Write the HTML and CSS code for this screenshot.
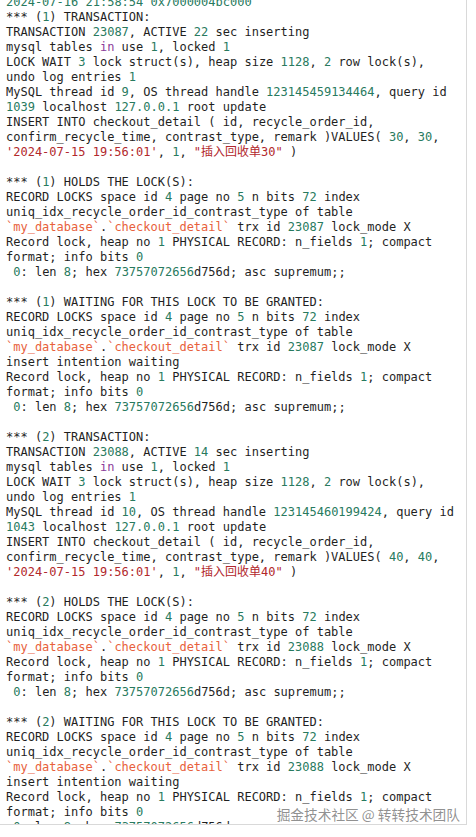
FILE: index.html
```html
<!DOCTYPE html>
<html lang="zh-CN">
<head>
<meta charset="utf-8">
<title>InnoDB deadlock log</title>
<link rel="stylesheet" href="styles.css">
</head>
<body>
<div class="page">
<div class="code-box">
<pre class="code"><span class="n">2024-07-16</span> <span class="n">21:58:54</span> <span class="n">0x7000004bc000</span>
*** (<span class="n">1</span>) TRANSACTION:
TRANSACTION <span class="n">23087</span>, ACTIVE <span class="n">22</span> sec inserting
mysql tables <span class="k">in</span> use <span class="n">1</span>, locked <span class="n">1</span>
LOCK WAIT <span class="n">3</span> lock struct(s), heap size <span class="n">1128</span>, <span class="n">2</span> row lock(s),
undo log entries <span class="n">1</span>
MySQL thread id <span class="n">9</span>, OS thread handle <span class="n">123145459134464</span>, query id
<span class="n">1039</span> localhost <span class="n">127.0.0.1</span> root update
INSERT INTO checkout_detail ( id, recycle_order_id,
confirm_recycle_time, contrast_type, remark )VALUES( <span class="n">30</span>, <span class="n">30</span>,
<span class="s">'2024-07-15 19:56:01'</span>, <span class="n">1</span>, <span class="s">"插入回收单30"</span> )

*** (<span class="n">1</span>) HOLDS THE LOCK(S):
RECORD LOCKS space id <span class="n">4</span> page no <span class="n">5</span> n bits <span class="n">72</span> index
uniq_idx_recycle_order_id_contrast_type of table
<span class="b">`my_database`</span>.<span class="b">`checkout_detail`</span> trx id <span class="n">23087</span> lock_mode X
Record lock, heap no <span class="n">1</span> PHYSICAL RECORD: n_fields <span class="n">1</span>; compact
format; info bits <span class="n">0</span>
 <span class="n">0</span>: len <span class="n">8</span>; hex <span class="n">73757072656</span>d756d; asc supremum;;

*** (<span class="n">1</span>) WAITING FOR THIS LOCK TO BE GRANTED:
RECORD LOCKS space id <span class="n">4</span> page no <span class="n">5</span> n bits <span class="n">72</span> index
uniq_idx_recycle_order_id_contrast_type of table
<span class="b">`my_database`</span>.<span class="b">`checkout_detail`</span> trx id <span class="n">23087</span> lock_mode X
insert intention waiting
Record lock, heap no <span class="n">1</span> PHYSICAL RECORD: n_fields <span class="n">1</span>; compact
format; info bits <span class="n">0</span>
 <span class="n">0</span>: len <span class="n">8</span>; hex <span class="n">73757072656</span>d756d; asc supremum;;

*** (<span class="n">2</span>) TRANSACTION:
TRANSACTION <span class="n">23088</span>, ACTIVE <span class="n">14</span> sec inserting
mysql tables <span class="k">in</span> use <span class="n">1</span>, locked <span class="n">1</span>
LOCK WAIT <span class="n">3</span> lock struct(s), heap size <span class="n">1128</span>, <span class="n">2</span> row lock(s),
undo log entries <span class="n">1</span>
MySQL thread id <span class="n">10</span>, OS thread handle <span class="n">123145460199424</span>, query id
<span class="n">1043</span> localhost <span class="n">127.0.0.1</span> root update
INSERT INTO checkout_detail ( id, recycle_order_id,
confirm_recycle_time, contrast_type, remark )VALUES( <span class="n">40</span>, <span class="n">40</span>,
<span class="s">'2024-07-15 19:56:01'</span>, <span class="n">1</span>, <span class="s">"插入回收单40"</span> )

*** (<span class="n">2</span>) HOLDS THE LOCK(S):
RECORD LOCKS space id <span class="n">4</span> page no <span class="n">5</span> n bits <span class="n">72</span> index
uniq_idx_recycle_order_id_contrast_type of table
<span class="b">`my_database`</span>.<span class="b">`checkout_detail`</span> trx id <span class="n">23088</span> lock_mode X
Record lock, heap no <span class="n">1</span> PHYSICAL RECORD: n_fields <span class="n">1</span>; compact
format; info bits <span class="n">0</span>
 <span class="n">0</span>: len <span class="n">8</span>; hex <span class="n">73757072656</span>d756d; asc supremum;;

*** (<span class="n">2</span>) WAITING FOR THIS LOCK TO BE GRANTED:
RECORD LOCKS space id <span class="n">4</span> page no <span class="n">5</span> n bits <span class="n">72</span> index
uniq_idx_recycle_order_id_contrast_type of table
<span class="b">`my_database`</span>.<span class="b">`checkout_detail`</span> trx id <span class="n">23088</span> lock_mode X
insert intention waiting
Record lock, heap no <span class="n">1</span> PHYSICAL RECORD: n_fields <span class="n">1</span>; compact
format; info bits <span class="n">0</span>
 <span class="n">0</span>: len <span class="n">8</span>; hex <span class="n">73757072656</span>d756d; asc supremum;;</pre>
<div class="watermark">掘金技术社区 @ 转转技术团队</div>
</div>
</div>
</body>
</html>
```

FILE: styles.css
```css
html, body {
  margin: 0;
  padding: 0;
  background: #ffffff;
}

.page {
  width: 476px;
  height: 837px;
  overflow: hidden;
}

.code-box {
  position: relative;
  width: 466px;
  height: 824px;
  overflow: hidden;
  border-right: 1px solid #d9d9d9;
  border-bottom: 1px solid #d9d9d9;
  background: #ffffff;
}

.code {
  margin: -5px 0 0 0;
  padding: 0 0 0 6px;
  font-family: "DejaVu Sans Mono", "Noto Sans CJK SC", monospace;
  font-size: 12px;
  line-height: 15px;
  color: #1f1f1f;
  white-space: pre;
}

.n { color: #287a5e; }
.s { color: #b2282c; }
.k { color: #8b3c9a; }
.b { color: #e8613c; }

.watermark {
  position: absolute;
  right: 6px;
  bottom: 1px;
  font-family: "Noto Sans CJK SC", "Noto Sans", sans-serif;
  font-size: 13.7px;
  line-height: 18px;
  color: rgba(125, 125, 125, 0.85);
  text-shadow: 0 0 2px #ffffff, 0 0 2px #ffffff;
}
```
